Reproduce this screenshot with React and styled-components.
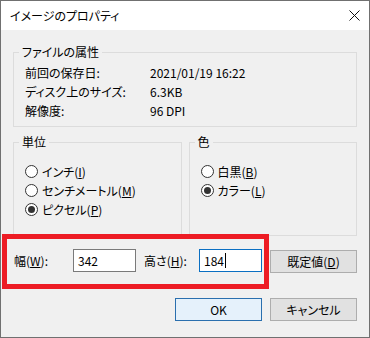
import React from "react";
import styled, { createGlobalStyle } from "styled-components";

const Global = createGlobalStyle`
  html, body { margin: 0; padding: 0; background: #fff; }
  body {
    font-family: "Noto Sans CJK JP", "Noto Sans", sans-serif;
    font-size: 12px;
    color: #000;
    font-feature-settings: "palt";
  }
  * { box-sizing: border-box; }
`;

const Window = styled.div`
  position: relative;
  width: 370px;
  height: 338px;
  border: 1px solid #707070;
  background: #f0f0f0;
  display: flex;
  flex-direction: column;
`;

const TitleBar = styled.div`
  height: 29px;
  flex: none;
  background: #fff;
  display: flex;
  align-items: center;
  justify-content: space-between;
  padding: 0 9px 0 9px;
  font-size: 12px;
  line-height: 16px;
`;

const CloseButton = styled.div`
  width: 12px;
  height: 12px;
  display: flex;
  align-items: center;
  justify-content: center;
`;

const Body = styled.div`
  flex: 1;
  display: flex;
  flex-direction: column;
  padding: 14px 12px 0 12px;
`;

const Group = styled.fieldset`
  margin: 0;
  min-width: 0;
  height: ${(p) => p.$h}px;
  border: 1px solid #dcdcdc;
  padding: ${(p) => p.$pt}px 11px 0 11px;
  flex: ${(p) => (p.$grow ? "1" : "none")};
`;

const Legend = styled.legend`
  padding: 0 3px;
  margin-left: -6px;
  line-height: 16px;
  font-size: 12px;
`;

const InfoGrid = styled.div`
  display: grid;
  grid-template-columns: 125px 1fr;
  line-height: 19px;
`;

const GroupRow = styled.div`
  display: flex;
  gap: 7px;
  margin-top: 7px;
`;

const RadioRow = styled.div`
  display: flex;
  align-items: center;
  height: 19px;
  gap: 4px;
`;

const RadioCircle = styled.span`
  position: relative;
  width: 13px;
  height: 13px;
  border-radius: 50%;
  border: 1px solid #333;
  background: #fff;
  flex: none;
  &::after {
    content: "";
    display: ${(p) => (p.$checked ? "block" : "none")};
    position: absolute;
    left: 2px;
    top: 2px;
    width: 7px;
    height: 7px;
    border-radius: 50%;
    background: #333;
  }
`;

const SizeRow = styled.div`
  display: flex;
  align-items: flex-start;
  margin-top: 13px;
  padding-left: 1px;
  height: 24px;
`;

const FieldLabel = styled.div`
  width: ${(p) => p.$w}px;
  margin-left: ${(p) => p.$ml || 0}px;
  line-height: 23px;
  flex: none;
`;

const TextBox = styled.div`
  width: 63px;
  height: 23px;
  flex: none;
  background: #fff;
  border: 1px solid ${(p) => (p.$focus ? "#0a6fc2" : "#7a7a7a")};
  padding-left: 4px;
  line-height: 21px;
  display: flex;
  align-items: center;
`;

const Caret = styled.span`
  display: inline-block;
  width: 1px;
  height: 15px;
  background: #000;
  margin-left: 1px;
`;

const Button = styled.div`
  width: 87px;
  height: 23px;
  flex: none;
  margin-left: ${(p) => p.$ml || 0}px;
  margin-top: ${(p) => p.$mt || 0}px;
  display: flex;
  align-items: center;
  justify-content: center;
  background: ${(p) => (p.$primary ? "#e5f1fb" : "#e1e1e1")};
  border: 1px solid ${(p) => (p.$primary ? "#2a6fae" : "#adadad")};
  font-size: 12px;
`;

const ButtonRow = styled.div`
  display: flex;
  justify-content: flex-end;
  gap: 8px;
  margin-top: 25px;
`;

const Highlight = styled.div`
  position: absolute;
  left: 1px;
  top: 233px;
  width: 267px;
  height: 55px;
  border: 5px solid #ed1c24;
  pointer-events: none;
`;

function Radio({ checked, children }) {
  return (
    <RadioRow>
      <RadioCircle $checked={checked} />
      <span>{children}</span>
    </RadioRow>
  );
}

export default function App() {
  return (
    <>
      <Global />
      <Window>
        <TitleBar>
          <span>イメージのプロパティ</span>
          <CloseButton>
            <svg width="11" height="11" viewBox="0 0 11 11">
              <path d="M0.5 0.5 L10.5 10.5 M10.5 0.5 L0.5 10.5" stroke="#111" strokeWidth="1" fill="none" />
            </svg>
          </CloseButton>
        </TitleBar>
        <Body>
          <Group $h={83} $pt={3}>
            <Legend>ファイルの属性</Legend>
            <InfoGrid>
              <span>前回の保存日:</span>
              <span>2021/01/19 16:22</span>
              <span>ディスク上のサイズ:</span>
              <span>6.3KB</span>
              <span>解像度:</span>
              <span>96 DPI</span>
            </InfoGrid>
          </Group>
          <GroupRow>
            <Group $h={102} $pt={12} $grow>
              <Legend>単位</Legend>
              <Radio>
                インチ(<u>I</u>)
              </Radio>
              <Radio>
                センチメートル(<u>M</u>)
              </Radio>
              <Radio checked>
                ピクセル(<u>P</u>)
              </Radio>
            </Group>
            <Group $h={102} $pt={12} $grow>
              <Legend>色</Legend>
              <Radio>
                白黒(<u>B</u>)
              </Radio>
              <Radio checked>
                カラー(<u>L</u>)
              </Radio>
            </Group>
          </GroupRow>
          <SizeRow>
            <FieldLabel $w={59}>
              幅(<u>W</u>):
            </FieldLabel>
            <TextBox>342</TextBox>
            <FieldLabel $w={55} $ml={8}>
              高さ(<u>H</u>):
            </FieldLabel>
            <TextBox $focus>
              184
              <Caret />
            </TextBox>
            <Button $ml={8} $mt={1}>
              既定値(<u>D</u>)
            </Button>
          </SizeRow>
          <ButtonRow>
            <Button $primary>OK</Button>
            <Button>キャンセル</Button>
          </ButtonRow>
        </Body>
        <Highlight />
      </Window>
    </>
  );
}
